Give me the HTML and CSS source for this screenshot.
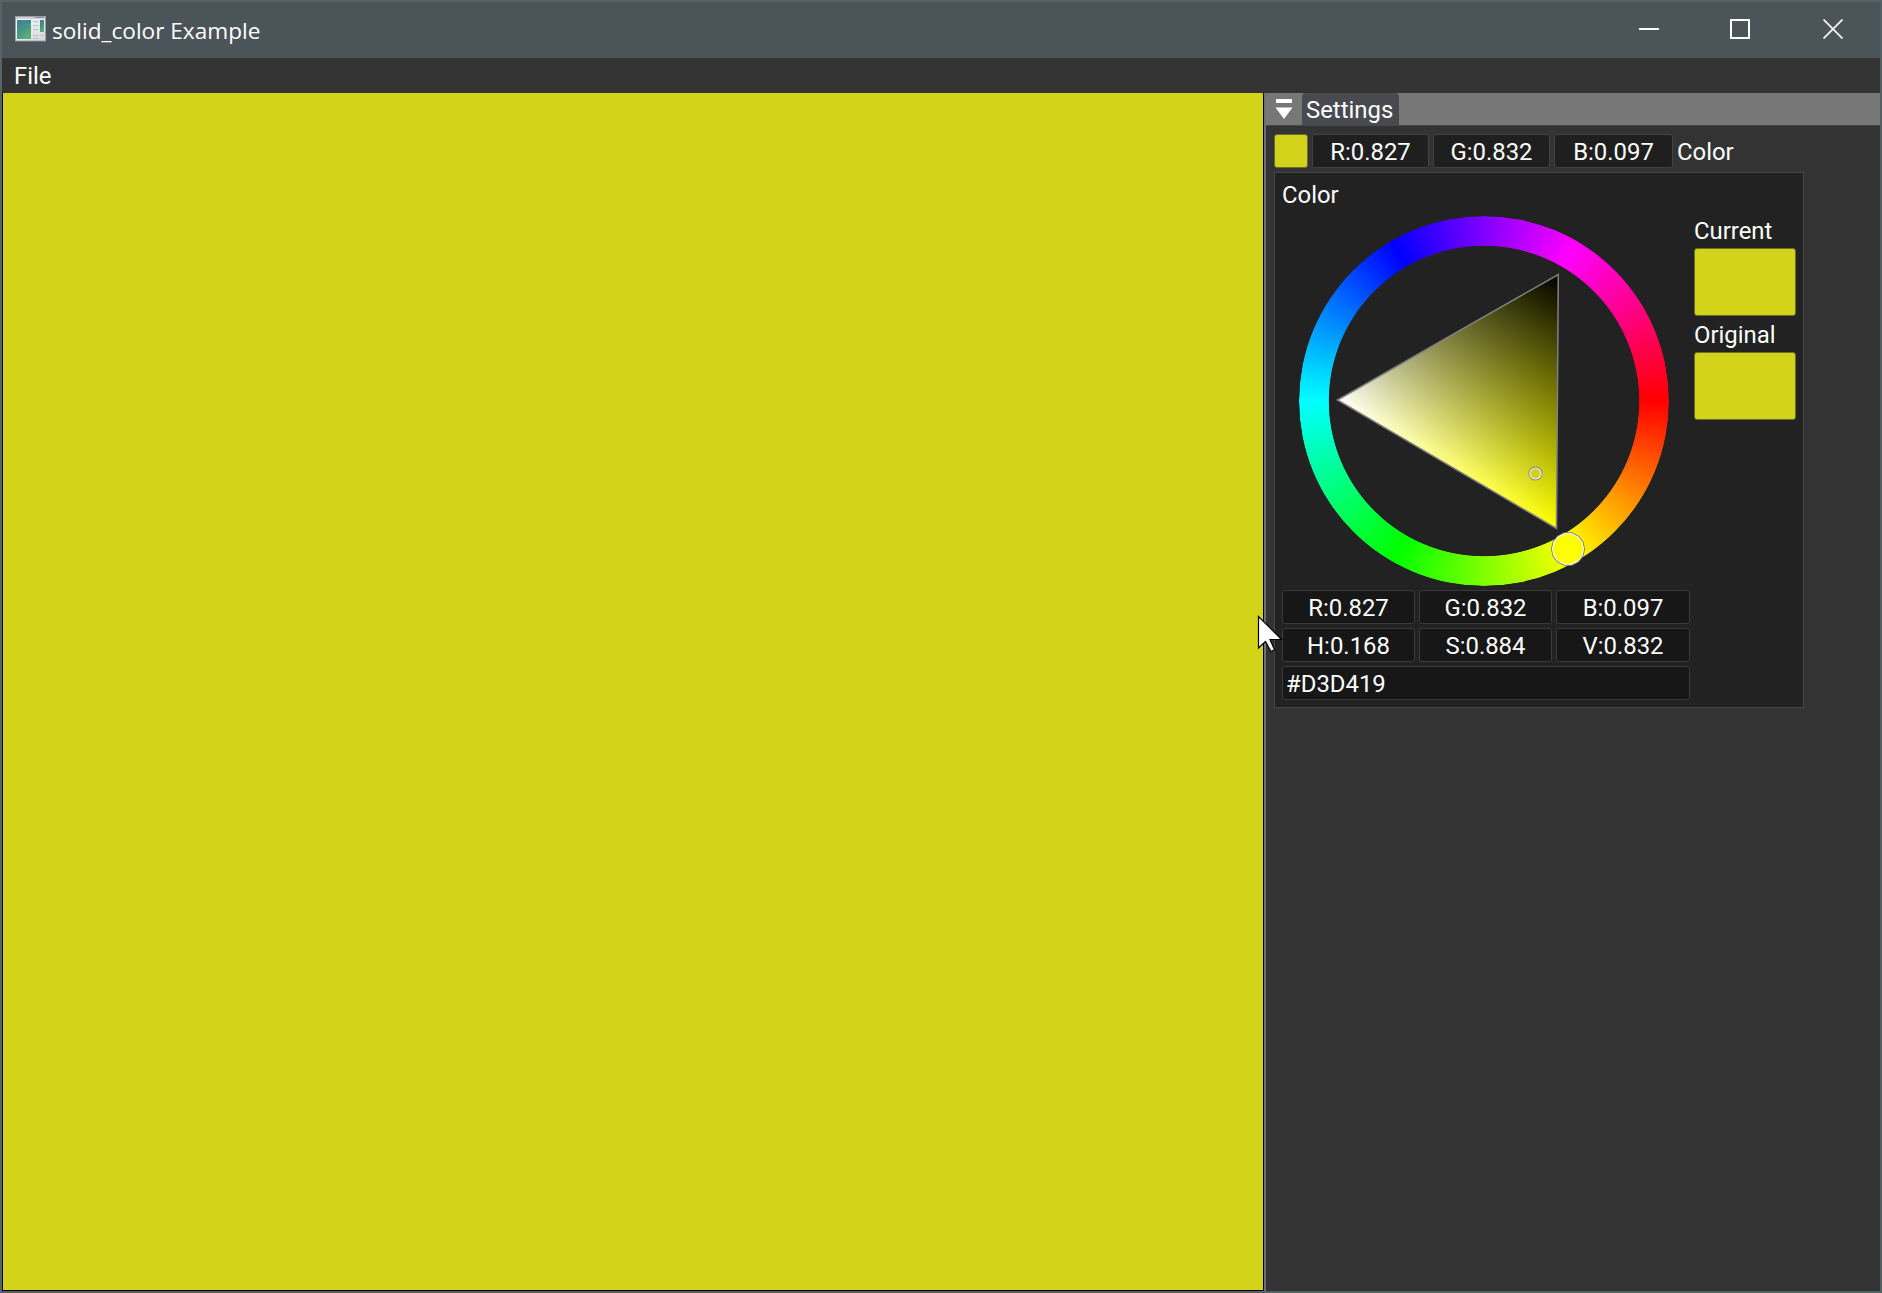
FILE: index.html
```html
<!DOCTYPE html>
<html lang="en">
<head>
<meta charset="utf-8">
<title>solid_color Example</title>
<link rel="stylesheet" href="styles.css">
</head>
<body>
<div class="window">
  <header class="titlebar">
    <svg class="app-icon" width="32" height="27" viewBox="0 0 32 27">
      <defs>
        <linearGradient id="pane" x1="0" y1="0" x2="0.5" y2="1"><stop offset="0" stop-color="#4779a5"/><stop offset="0.5" stop-color="#419184"/><stop offset="1" stop-color="#5bae75"/></linearGradient>
        <linearGradient id="frame" x1="0" y1="0" x2="1" y2="1"><stop offset="0" stop-color="#fff"/><stop offset="1" stop-color="#d3d5d6"/></linearGradient>
      </defs>
      <rect x="0.5" y="0.5" width="30.5" height="25.5" fill="#3d4448"/>
      <rect x="0.5" y="0.5" width="30" height="24.5" fill="url(#frame)" stroke="#9ba3a8"/>
      <path d="M1 2h29" stroke="#cbd2d9" stroke-width="2"/>
      <path d="M20 1.5h9" stroke="#8d979f"/>
      <rect x="2" y="4" width="14" height="19" fill="url(#pane)"/>
      <path d="M2 15q5-6 14-7" stroke="#69a99b" fill="none" opacity=".5"/>
      <rect x="25" y="4" width="4" height="12" fill="url(#pane)"/>
      <path d="M18 5.5h5M18 9.500h5M18 13.500h5M18 19.500h5M25 19.500h4M18 22.500h5" stroke="#b9bdbf"/>
    </svg>
    <h1 class="title">solid_color Example</h1>
    <div class="controls">
      <svg width="20" height="20" viewBox="0 0 20 20"><path d="M0 10h20" stroke="#fff" stroke-width="2"/></svg>
      <svg width="20" height="20" viewBox="0 0 20 20"><path d="M1 1h18v18H1z" fill="none" stroke="#fff" stroke-width="2"/></svg>
      <svg width="20" height="20" viewBox="0 0 20 20"><path d="M.5 .5l19 19M19.500 .5l-19 19" stroke="#f2f2f2" stroke-width="1.8"/></svg>
    </div>
  </header>
  <nav class="menubar"><span>File</span></nav>
  <main class="workspace">
    <section class="viewport"></section>
    <aside class="panel">
      <div class="tabbar">
        <svg class="dock-menu" width="18" height="21" viewBox="0 0 18 21"><path d="M1 0h16v4H1zM.5 8.500h17L9 20z" fill="#fff"/></svg>
        <div class="tab">Settings</div>
      </div>
      <div class="color-row">
        <div class="swatch chip"></div>
        <div class="field">R:0.827</div>
        <div class="field">G:0.832</div>
        <div class="field last">B:0.097</div>
        <span class="label">Color</span>
      </div>
      <div class="popup">
        <div class="popup-title">Color</div>
        <div class="picker">
          <div class="wheel">
            <div class="ring"></div>
            <svg class="triangle" width="370" height="370" viewBox="1299 216 370 370">
              <defs>
                <linearGradient id="tint" gradientUnits="userSpaceOnUse" x1="1557.600" y1="401.500" x2="1337.500" y2="400"><stop offset="0" stop-color="#fdff00"/><stop offset="1" stop-color="#fff"/></linearGradient>
                <linearGradient id="shade" gradientUnits="userSpaceOnUse" x1="1447.200" y1="464.300" x2="1558.500" y2="274.500"><stop offset="0" stop-color="#000" stop-opacity="0"/><stop offset="1" stop-color="#000"/></linearGradient>
              </defs>
              <path d="M1337.500 400L1558.300 274.500L1556.500 528.500z" fill="url(#tint)"/>
              <path d="M1337.500 400L1558.300 274.500L1556.500 528.500z" fill="url(#shade)" stroke="#808080" stroke-width="1.500"/>
              <circle cx="1535.500" cy="473.500" r="6" fill="#d3d419" stroke="#808080" stroke-width="2"/>
              <circle cx="1535.500" cy="473.500" r="5.500" fill="none" stroke="#fff" stroke-width="1.200"/>
              <g transform="translate(1568 549)">
                <path d="M16.300 0L14.700 7.100L10.200 12.700L3.600 15.900L-3.600 15.900L-10.200 12.700L-14.700 7.100L-16.300 0L-14.700 -7.100L-10.200 -12.700L-3.600 -15.900L3.600 -15.900L10.200 -12.700L14.700 -7.100z" fill="#fdff00" stroke="#808080" stroke-width="1.500"/>
                <path transform="scale(.955)" d="M16.300 0L14.700 7.100L10.200 12.700L3.600 15.900L-3.600 15.900L-10.200 12.700L-14.700 7.100L-16.300 0L-14.700 -7.100L-10.200 -12.700L-3.600 -15.900L3.600 -15.900L10.200 -12.700L14.700 -7.100z" fill="none" stroke="#fff" stroke-width="1.100"/>
              </g>
            </svg>
          </div>
          <div class="compare">
            <div class="caption">Current</div>
            <div class="swatch"></div>
            <div class="caption">Original</div>
            <div class="swatch"></div>
          </div>
        </div>
        <div class="fields">
          <div class="field">R:0.827</div><div class="field">G:0.832</div><div class="field">B:0.097</div>
          <div class="field">H:0.168</div><div class="field">S:0.884</div><div class="field">V:0.832</div>
          <div class="field hex">#D3D419</div>
        </div>
      </div>
    </aside>
  </main>
  <svg class="pointer" width="26" height="40" viewBox="0 0 26 40"><path d="M1.500 1.500V33L8.500 26.500L14 36.500L17.500 34.800L13 24.500H24.500z" fill="#fff" stroke="#000" stroke-width="1.200"/></svg>
</div>
</body>
</html>
```
FILE: styles.css
```css
* { box-sizing: border-box; }

body {
  margin: 0;
  font: 23.9px/28px Roboto, "Liberation Sans", sans-serif;
  color: #fff;
}

svg { display: block; }

.window {
  position: relative;
  display: flex;
  flex-direction: column;
  width: 1882px;
  height: 1293px;
  border: 2px solid #586368;
  border-right-color: #526062;
  border-bottom-color: #526062;
  background: #333;
  overflow: hidden;
}

.titlebar {
  display: flex;
  align-items: center;
  height: 56px;
  padding-left: 13px;
  background: #4b5459;
}

.app-icon { margin-bottom: 2px; }

.title {
  margin: 1px 0 0 5px;
  font: 22.6px/30px "Open Sans", "Noto Sans", sans-serif;
}

.controls {
  display: flex;
  gap: 71px;
  margin: 0 37px 0 auto;
  padding-bottom: 2px;
}

.controls svg:last-child { margin-left: 2px; }

.menubar {
  height: 35px;
  padding: 4px 12px;
}

.workspace {
  display: flex;
  flex: 1;
}

.viewport {
  width: 1262px;
  border: solid #000;
  border-width: 0 1px 1px;
  background: #d3d419;
}

.panel {
  flex: 1;
  border-left: 2px solid #6e6e80;
}

.tabbar {
  display: flex;
  height: 33px;
  padding-left: 9px;
  border-bottom: 1px solid #484848;
  background: #777;
}

.dock-menu { margin: 6px 9px 0 0; }

.tab {
  width: 97px;
  padding: 3px 0 0 4px;
  border-radius: 4px 4px 0 0;
  background: #484a4f;
}

.swatch {
  height: 68px;
  border: 1px solid #6b6c35;
  border-radius: 3px;
  background: #d3d419;
}

.field {
  height: 34px;
  padding: 3px 0 0;
  border: 1px solid #424242;
  border-radius: 3px;
  background: #1f1f1f;
  text-align: center;
}

.color-row {
  display: flex;
  gap: 4px;
  height: 34px;
  margin: 8px 0 4px 8px;
}

.color-row .field { width: 117px; }
.color-row .field.last { width: 119px; }
.chip { width: 34px; height: 34px; }
.label { padding-top: 4px; }

.popup {
  width: 530px;
  height: 536px;
  margin-left: 8px;
  padding: 7px;
  border: 1px solid #464646;
  background: #222;
}

.popup-title {
  height: 36px;
  padding-top: 1px;
}

.picker {
  display: flex;
  justify-content: space-between;
  height: 374px;
  padding-left: 17px;
}

.wheel {
  display: grid;
  width: 370px;
  height: 370px;
}

.ring, .triangle { grid-area: 1 / 1; }

.triangle { z-index: 1; }

.ring {
  border-radius: 50%;
  background: conic-gradient(from 90deg, #f00, #ff0, #0f0, #0ff, #00f, #f0f, #f00);
  mask: radial-gradient(circle, transparent 154.800px, #000 155.600px);
}

.compare { width: 102px; }
.caption { padding: 1px 0 3px; }
.compare .swatch + .caption { padding-top: 5px; }

.fields {
  display: grid;
  grid-template-columns: 133px 133px 134px;
  gap: 4px;
}

.fields .field {
  border-color: #3b3b3b;
  background: #171717;
}

.fields .hex {
  grid-column: span 3;
  padding-left: 3px;
  text-align: left;
}

.pointer {
  position: absolute;
  left: 1255px;
  top: 613px;
}
```
